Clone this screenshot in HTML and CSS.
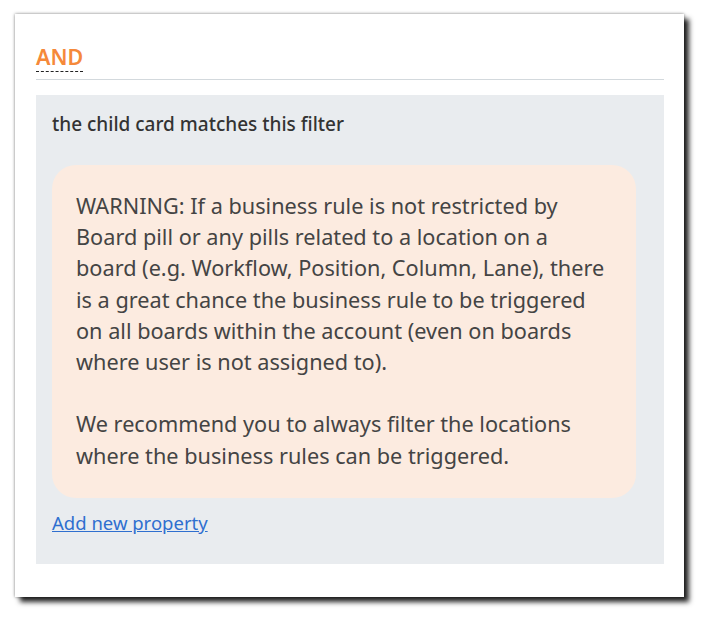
FILE: index.html
```html
<!DOCTYPE html>
<html lang="en">
<head>
    <meta charset="UTF-8">
    <title>Business rule filter</title>
    <link rel="stylesheet" href="styles.css">
</head>
<body>
    <div class="card">
        <div class="card-header">
            <span class="operator">AND</span>
        </div>
        <div class="filter-group">
            <p class="filter-title">the child card matches this filter</p>
            <div class="warning">
                <p>WARNING: If a business rule is not restricted by Board pill or any pills related to a location on a board (e.g. Workflow, Position, Column, Lane), there is a great chance the business rule to be triggered on all boards within the account (even on boards where user is not assigned to).</p>
                <p>We recommend you to always filter the locations where the business rules can be triggered.</p>
            </div>
            <a href="#" class="add-link">Add new property</a>
        </div>
    </div>
</body>
</html>
```

FILE: styles.css
```css
* {
    margin: 0;
    padding: 0;
    box-sizing: border-box;
    font-family: 'Noto Sans', sans-serif;
}

body {
    background: #fff;
    padding: 14px 15px;
}

.card {
    width: 669px;
    background: white;
    padding: 20px 20px 33px 21px;
    box-shadow: 0 0 3px rgba(0, 0, 0, 0.5), 5px 5px 5px rgba(0, 0, 0, 0.85);
}

.card-header {
    padding-top: 11px;
    padding-bottom: 8px;
    border-bottom: 1px solid #d3d9dd;
    margin-bottom: 15px;
    line-height: 24px;
}

.operator {
    color: #f5893a;
    font-size: 21.5px;
    font-weight: 600;
    border-bottom: 1px dashed #222;
}

.filter-group {
    background: #e9ecef;
    padding: 16px 28px 28px 16px;
}

.filter-title {
    color: #333;
    font-size: 19px;
    font-weight: 500;
    line-height: 26px;
    margin-bottom: 28px;
}

.warning {
    background: #fcebe0;
    border-radius: 24px;
    padding: 25px 24px 27px 24px;
    color: #444;
    font-size: 21.7px;
    line-height: 31.2px;
}

.warning p + p {
    margin-top: 31.2px;
}

.add-link {
    display: inline-block;
    margin-top: 12px;
    color: #2f6fcf;
    font-size: 18.5px;
    line-height: 26px;
}
```
